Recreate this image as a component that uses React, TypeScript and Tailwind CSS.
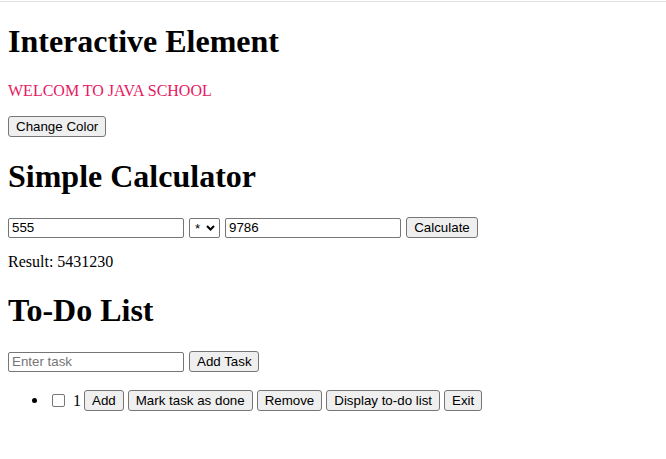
import { useState } from 'react';

const serif = "font-['Liberation_Serif','Times_New_Roman',serif]";
const ctrl = "font-['Liberation_Sans',Arial,sans-serif] text-[13.33px] text-black";
const btn = `${ctrl} h-[21px] px-[7px] leading-none bg-[#efefef] border border-[#767676] rounded-[3px] whitespace-nowrap`;
const field = `${ctrl} h-[20px] w-[176px] px-[3px] leading-none bg-white border border-[#767676] rounded-[2px] placeholder:text-[#757575]`;

export default function App() {
  const [color] = useState('#e5195f');
  const [a, setA] = useState('555');
  const [b, setB] = useState('9786');
  const [op, setOp] = useState('*');
  const [task, setTask] = useState('');

  return (
    <div className={`${serif} min-h-screen bg-white text-black`}>
      <div className="h-[2px] border-b border-[#e1e1e1]" />
      <div className="px-2">
        <h1 className="mt-[21px] text-[32px] font-bold leading-[37px]">Interactive Element</h1>
        <p className="mt-[22px] text-base leading-[18px]" style={{ color }}>
          WELCOM TO JAVA SCHOOL
        </p>
        <div className="mt-[16px] flex">
          <button className={btn}>Change Color</button>
        </div>

        <h1 className="mt-[21px] text-[32px] font-bold leading-[37px]">Simple Calculator</h1>
        <div className="mt-[22px] flex items-center gap-[5px]">
          <input className={field} value={a} onChange={(e) => setA(e.target.value)} />
          <div className="relative">
            <select
              className={`${ctrl} block h-[20px] w-[31px] appearance-none pl-[5px] bg-white border border-[#767676] rounded-[2px]`}
              value={op}
              onChange={(e) => setOp(e.target.value)}
            >
              <option>+</option>
              <option>-</option>
              <option>*</option>
              <option>/</option>
            </select>
            <svg
              className="pointer-events-none absolute right-[5px] top-[7px]"
              width="9"
              height="6"
              viewBox="0 0 9 6"
            >
              <path d="M1 1l3.5 3.5L8 1" fill="none" stroke="#000" strokeWidth="2" />
            </svg>
          </div>
          <input className={field} value={b} onChange={(e) => setB(e.target.value)} />
          <button className={`${btn} w-[72px]`}>Calculate</button>
        </div>
        <p className="mt-[15px] text-base leading-[18px]">Result: 5431230</p>

        <h1 className="mt-[21px] text-[32px] font-bold leading-[37px]">To-Do List</h1>
        <div className="mt-[22px] flex items-center gap-[5px]">
          <input
            className={field}
            placeholder="Enter task"
            value={task}
            onChange={(e) => setTask(e.target.value)}
          />
          <button className={`${btn} w-[70px]`}>Add Task</button>
        </div>

        <ul className="mt-[18px] pl-[24px]">
          <li className="flex items-center">
            <span className="h-[5px] w-[5px] rounded-full bg-black" />
            <input
              type="checkbox"
              className="ml-[15px] h-[13px] w-[13px] appearance-none rounded-[2px] border border-[#767676] bg-white"
            />
            <span className="ml-[8px] mr-[3px] text-base leading-[18px]">1</span>
            <div className="flex gap-[4px]">
              <button className={btn}>Add</button>
              <button className={btn}>Mark task as done</button>
              <button className={btn}>Remove</button>
              <button className={btn}>Display to-do list</button>
              <button className={btn}>Exit</button>
            </div>
          </li>
        </ul>
      </div>
    </div>
  );
}
